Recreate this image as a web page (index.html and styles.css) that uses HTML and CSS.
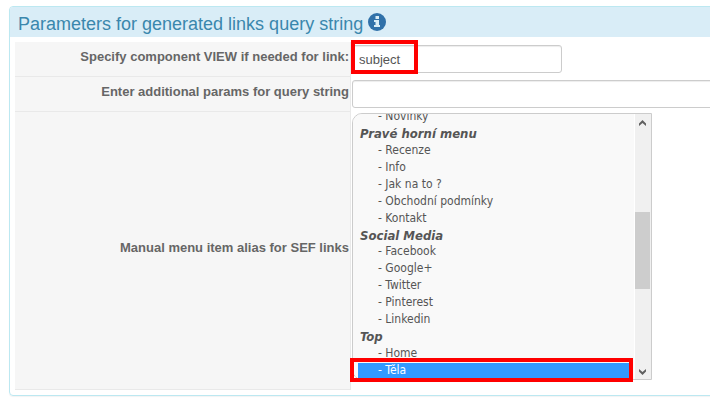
FILE: index.html
```html
<!DOCTYPE html>
<html lang="en">
<head>
  <meta charset="UTF-8">
  <title>Parameters for generated links query string</title>
  <link rel="stylesheet" href="styles.css">
</head>
<body>
  <form class="panel">
    <div class="panel-heading">
      <h3>Parameters for generated links query string</h3>
      <svg class="info-icon" viewBox="0 0 18 18" width="18" height="18">
        <circle cx="9" cy="9" r="9" fill="#3071a9"/>
        <path d="M7.500 3h3.500v3H7.500zM6 7h5v5h1v2H6v-2h1.500V9H6z" fill="#d9edf7"/>
      </svg>
    </div>
    <div class="panel-body">
      <div class="row">
        <label class="row-label" for="view">Specify component VIEW if needed for link:</label>
        <div class="row-field">
          <input type="text" id="view" class="input-short" value="subject">
          <div class="mark mark-view"></div>
        </div>
      </div>
      <div class="row">
        <label class="row-label" for="params">Enter additional params for query string</label>
        <div class="row-field">
          <input type="text" id="params" class="input-long">
        </div>
      </div>
      <div class="row row-menu">
        <label class="row-label" for="menuItem">Manual menu item alias for SEF links</label>
        <div class="row-field">
          <div class="listbox">
            <select id="menuItem" size="16" multiple>
              <option>- Novinky</option>
              <optgroup label="Pravé horní menu">
                <option>- Recenze</option>
                <option>- Info</option>
                <option>- Jak na to ?</option>
                <option>- Obchodní podmínky</option>
                <option>- Kontakt</option>
              </optgroup>
              <optgroup label="Social Media">
                <option>- Facebook</option>
                <option>- Google+</option>
                <option>- Twitter</option>
                <option>- Pinterest</option>
                <option>- Linkedin</option>
              </optgroup>
              <optgroup label="Top">
                <option>- Home</option>
                <option selected>- Těla</option>
              </optgroup>
            </select>
            <div class="scrollbar">
              <svg viewBox="0 0 7 6" width="7" height="6"><path d="M0 6V3.500L3.500 0L7 3.500V6L3.500 3z" fill="#606060"/></svg>
              <div class="scroll-track"><div class="scroll-thumb"></div></div>
              <svg viewBox="0 0 7 6" width="7" height="6"><path d="M0 0V2.500L3.500 6L7 2.500V0L3.500 3z" fill="#606060"/></svg>
            </div>
          </div>
          <div class="mark mark-item"></div>
        </div>
      </div>
    </div>
  </form>

  <script>
    document.getElementById('menuItem').scrollTop = 5;
  </script>
</body>
</html>
```
FILE: styles.css
```css
* {
  box-sizing: border-box;
}
body {
  margin: 0;
  padding: 6px 0 6px 9px;
  background: #fff;
  font-family: "Liberation Sans", Arial, sans-serif;
  font-size: 13px;
  line-height: 18px;
  color: #555;
  overflow-x: hidden;
}
/* the panel runs on past the right edge */
.panel {
  margin-right: -20px;
  border: 1px solid #bce8f1;
  border-radius: 4px;
  box-shadow: 0 1px 1px rgba(0,0,0,0.05);
}
.panel-heading {
  display: flex;
  gap: 5px;
  height: 30px;
  padding: 6px 8px 0;
  background: #d9edf7;
  border-radius: 3px 3px 0 0;
}
.panel-heading h3 {
  margin: 0;
  font-size: 18px;
  font-weight: normal;
  line-height: 22px;
  color: #3a87ad;
}
.panel-body {
  padding: 5px;
}
.row {
  display: flex;
  height: 35px;
}
.row-menu {
  height: 278px;
}
.row-label {
  width: 336px;
  padding-top: 6px;
  padding-right: 1px;
  background: #f6f6f6;
  border-right: 1px solid #e9e9e9;
  border-bottom: 1px solid #e9e9e9;
  font-weight: bold;
  text-align: right;
  color: #666;
}
.row-menu .row-label {
  display: flex;
  align-items: center;
  justify-content: flex-end;
  padding-top: 0;
  padding-bottom: 6px;
}
.row-field {
  position: relative;
  flex: 1;
  padding: 3px 0 0 1px;
}
.row-menu .row-field {
  padding-top: 1px;
}
input {
  display: block;
  height: 28px;
  padding: 4px 6px;
  border: 1px solid #ccc;
  border-radius: 3px;
  box-shadow: inset 0 1px 1px rgba(0,0,0,0.075);
  font-family: "Liberation Sans", Arial, sans-serif;
  font-size: 13px;
  color: #555;
}
.input-short {
  width: 210px;
}
.input-long {
  width: 100%;
}
.listbox {
  display: flex;
  width: 300px;
  height: 267px;
  border: 1px solid #ccc;
  border-radius: 10px 0 0 10px;
  background: #f9f9f9;
  overflow: hidden;
}
select {
  flex: 1;
  height: 265px;
  padding: 0 2px 0 5px;
  border: 0;
  outline: none;
  background: #f9f9f9;
  font-family: "DejaVu Sans Condensed", "DejaVu Sans", Tahoma, sans-serif;
  font-size: 12px;
  color: #555;
  overflow-y: auto;
  scrollbar-width: none;
}
optgroup {
  font-size: 13px;
  font-style: italic;
  font-weight: bold;
}
option,
optgroup option {
  height: 17px;
  min-height: 17px;
  padding: 0 0 0 20px;
  font-size: 12px;
  font-style: normal;
  font-weight: normal;
  line-height: 17px;
}
option::before {
  content: none;
}
option:checked {
  background: #39f linear-gradient(#39f, #39f);
  color: #fff;
}
.scrollbar {
  display: flex;
  flex-direction: column;
  align-items: center;
  width: 17px;
  padding: 6px 1px 4px 0;
  border-left: 1px solid #fff;
  background: #f0f0f0;
}
.scroll-track {
  flex: 1;
  width: 100%;
  padding-top: 86px;
}
.scroll-thumb {
  height: 77px;
  background: #cdcdcd;
}
/* red frames drawn over the form */
.mark {
  position: absolute;
  border: 4px solid #f00;
  pointer-events: none;
}
.mark-view {
  top: -2px;
  left: 0;
  width: 67px;
  height: 34px;
}
.mark-item {
  top: 246px;
  left: -1px;
  width: 283px;
  height: 24px;
}
```
